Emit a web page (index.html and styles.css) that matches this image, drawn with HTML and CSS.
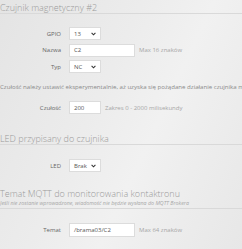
FILE: index.html
```html
<!DOCTYPE html>
<html lang="pl">
<head>
<meta charset="utf-8">
<link rel="stylesheet" href="styles.css">
</head>
<body>
<div class="page">
  <div class="legend first">Czujnik magnetyczny #2</div>
  <div class="rows">
    <div class="row">
      <span class="label">GPIO</span>
      <span class="select">13<svg class="chev" viewBox="0 0 6 4"><polyline points="0.7,0.7 3,3 5.3,0.7"/></svg></span>
    </div>
    <div class="row">
      <span class="label">Nazwa</span>
      <span class="input wide">C2</span>
      <span class="hint">Max 16 znaków</span>
    </div>
    <div class="row">
      <span class="label">Typ</span>
      <span class="select">NC<svg class="chev" viewBox="0 0 6 4"><polyline points="0.7,0.7 3,3 5.3,0.7"/></svg></span>
    </div>
  </div>
  <p class="desc">Czułość należy ustawić eksperymentalnie, aż uzyska się pożądane działanie czujnika magnetycznego</p>
  <div class="row single">
    <span class="label">Czułość</span>
    <span class="input short">200</span>
    <span class="hint">Zakres 0 - 2000 milisekundy</span>
  </div>
  <div class="legend second">LED przypisany do czujnika</div>
  <div class="row single led">
    <span class="label">LED</span>
    <span class="select">Brak<svg class="chev" viewBox="0 0 6 4"><polyline points="0.7,0.7 3,3 5.3,0.7"/></svg></span>
  </div>
  <div class="legend third">Temat MQTT do monitorowania kontaktronu
    <div class="sub">Jeśli nie zostanie wprowadzone, wiadomość nie będzie wysłana do MQTT Brokera</div>
  </div>
  <div class="row single temat">
    <span class="label">Temat</span>
    <span class="input wide">/brama03/C2</span>
    <span class="hint">Max 64 znaków</span>
  </div>
</div>
</body>
</html>
```
FILE: styles.css
```css
html, body {
  margin: 0;
  padding: 0;
}
body {
  width: 242px;
  height: 249px;
  overflow: hidden;
  font-family: "Open Sans", "Liberation Sans", sans-serif;
  background: linear-gradient(115deg, #e4e4e4 0%, #ececec 40%, #f1f1f1 60%, #e7e7e7 100%);
}
.page {
  width: 242px;
  white-space: nowrap;
  overflow: hidden;
}
.legend {
  font-weight: 300;
  font-size: 9px;
  color: #9a9a9a;
  border-bottom: 1px solid #d9d9d9;
  line-height: 11px;
  padding-bottom: 0;
}
.legend.first {
  padding-top: 2px;
}
.legend.second {
  margin-top: 19px;
}
.legend.third {
  margin-top: 16px;
  padding-bottom: 1px;
}
.sub {
  font-style: italic;
  font-size: 5.3px;
  line-height: 8px;
  color: #a8a8a8;
  font-weight: 400;
}
.rows {
  display: flex;
  flex-direction: column;
  gap: 3.5px;
  margin-top: 13px;
}
.row {
  display: flex;
  align-items: center;
  height: 13px;
}
.row.single {
  margin-top: 10px;
}
.row.led {
  margin-top: 14px;
}
.row.temat {
  margin-top: 14px;
  height: 14px;
}
.label {
  width: 61px;
  text-align: right;
  font-size: 6px;
  color: #666;
  margin-right: 8px;
  flex: none;
}
.select, .input {
  box-sizing: border-box;
  height: 100%;
  background: #fff;
  border: 1px solid #dcdcdc;
  font-size: 6px;
  color: #555;
  display: flex;
  align-items: center;
  padding-left: 4px;
  flex: none;
}
.select {
  width: 32px;
  justify-content: space-between;
  padding-right: 4px;
}
.chev {
  width: 5px;
  height: 4px;
  fill: none;
  stroke: #333;
  stroke-width: 1.3;
}
.input.wide {
  width: 66px;
}
.input.short {
  width: 32px;
}
.hint {
  font-size: 6px;
  color: #a6a6a6;
  margin-left: 4px;
}
.desc {
  margin: 10px 0 0 0;
  font-size: 6.1px;
  line-height: 8px;
  color: #8a8a8a;
  overflow: hidden;
}
```
